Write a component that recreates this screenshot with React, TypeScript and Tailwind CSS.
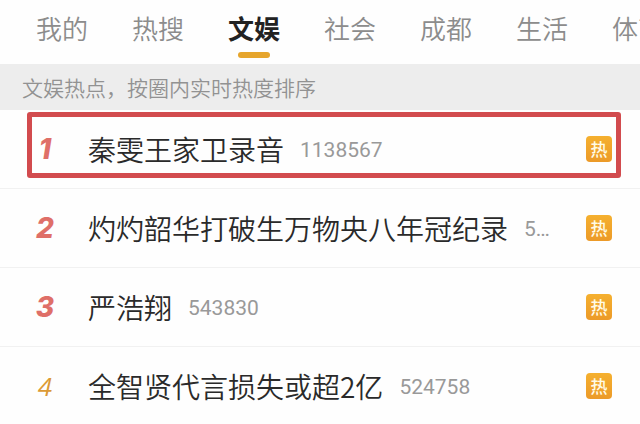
import clsx from 'clsx'

const tabs = ['我的', '热搜', '文娱', '社会', '成都', '生活', '体育']

interface Topic {
  title: string
  heat: string
  marked?: boolean
}

const topics: Topic[] = [
  { title: '秦雯王家卫录音', heat: '1138567', marked: true },
  { title: '灼灼韶华打破生万物央八年冠纪录', heat: '5…' },
  { title: '严浩翔', heat: '543830' },
  { title: '全智贤代言损失或超2亿', heat: '524758' },
]

function TabBar({ active }: { active: string }) {
  return (
    <nav className="flex h-16 gap-11 overflow-hidden pl-9">
      {tabs.map((tab) => (
        <button
          key={tab}
          type="button"
          className={clsx(
            'flex shrink-0 flex-col items-center pt-2 text-[26px] leading-10',
            tab === active ? 'font-bold text-[#222222]' : 'font-[350] text-[#8c8c8c]'
          )}
        >
          {tab}
          {tab === active && <span className="mt-1 h-[6px] w-8 rounded-full bg-[#e6a52c]" />}
        </button>
      ))}
    </nav>
  )
}

function TopicRow({ topic, rank }: { topic: Topic; rank: number }) {
  return (
    <li className="relative flex h-[79px] items-center border-b border-[#f1f1f1] pr-7 pl-[34px]">
      {topic.marked && (
        <span className="pointer-events-none absolute top-[2px] right-[19px] bottom-[10px] left-[27px] rounded-[3px] border-[5px] border-[#d24b4e]" />
      )}
      <span
        className={clsx(
          'w-[22px] shrink-0 text-center italic',
          rank <= 3
            ? 'font-[Inter,sans-serif] text-[28px] font-extrabold text-[#df6f68]'
            : "font-['Open_Sans',sans-serif] text-[26px] font-normal text-[#dc9a35]"
        )}
      >
        {rank}
      </span>
      <a href="#" className="ml-8 flex min-w-0 flex-1 items-center gap-4">
        <span className="truncate text-[28px] leading-10 font-[350] text-[#2a2a2a]">{topic.title}</span>
        <span className="shrink-0 pt-1 font-[Roboto,sans-serif] text-[21px] font-normal text-[#999999]">
          {topic.heat}
        </span>
      </a>
      <span className="flex size-[26px] shrink-0 items-center justify-center rounded-[4px] bg-gradient-to-b from-[#f5b02f] to-[#ec9a28] pb-[2px] text-[17px] leading-none font-medium text-[#fffbe8]">
        热
      </span>
    </li>
  )
}

export default function App() {
  return (
    <main className="min-h-screen w-full overflow-hidden bg-[#fefefe] font-['Noto_Sans_CJK_SC',sans-serif]">
      <TabBar active="文娱" />
      <p className="bg-[#ededed] px-[22px] py-2 text-[21px] leading-[30px] font-[350] text-[#929292]">
        文娱热点，按圈内实时热度排序
      </p>
      <ol>
        {topics.map((topic, i) => (
          <TopicRow key={topic.title} topic={topic} rank={i + 1} />
        ))}
      </ol>
    </main>
  )
}
